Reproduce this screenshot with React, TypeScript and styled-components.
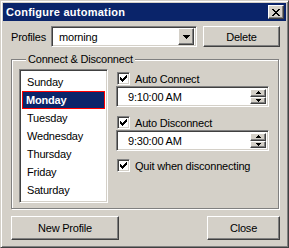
import React from "react";
import styled, { createGlobalStyle } from "styled-components";

const FACE = "#d4d0c8";
const NAVY = "#0a246a";

const GlobalStyle = createGlobalStyle`
  html, body {
    margin: 0;
    padding: 0;
    background: ${FACE};
  }
  body {
    font-family: "Liberation Sans", Arial, sans-serif;
    font-size: 11px;
    letter-spacing: -0.2px;
    color: #000;
  }
`;

const Window = styled.div`
  width: 289px;
  height: 248px;
  box-sizing: border-box;
  background: ${FACE};
  border: 1px solid;
  border-color: ${FACE} #404040 #404040 ${FACE};
  box-shadow: inset 1px 1px #fff, inset -1px -1px #808080;
  padding: 2px;
  display: flex;
  flex-direction: column;
`;

const TitleBar = styled.div`
  height: 18px;
  flex: none;
  background: ${NAVY};
  display: flex;
  align-items: center;
  justify-content: space-between;
  padding: 0 2px 0 3px;
`;

const TitleText = styled.div`
  color: #fff;
  font-weight: bold;
  font-size: 11px;
  letter-spacing: 0.25px;
`;

const raised = `
  border: 1px solid;
  border-color: #fff #404040 #404040 #fff;
  box-shadow: inset -1px -1px #808080;
  background: ${FACE};
`;

const sunken = `
  border: 1px solid;
  border-color: #808080 #fff #fff #808080;
  box-shadow: inset 1px 1px #404040, inset -1px -1px ${FACE};
`;

const CaptionButton = styled.div`
  ${raised}
  box-sizing: border-box;
  width: 16px;
  height: 14px;
  display: flex;
  align-items: center;
  justify-content: center;
`;

const ProfileRow = styled.div`
  display: flex;
  align-items: center;
  margin-top: 5px;
  padding-left: 8px;
  height: 21px;
`;

const FieldLabel = styled.div`
  width: 40px;
`;

const Combo = styled.div`
  ${sunken}
  box-sizing: border-box;
  width: 146px;
  height: 21px;
  background: #fff;
  display: flex;
  align-items: center;
  padding: 2px;
`;

const ComboText = styled.div`
  flex: 1;
  padding-left: 5px;
`;

const ArrowButton = styled.div`
  ${raised}
  box-sizing: border-box;
  width: 16px;
  height: 17px;
  display: flex;
  align-items: center;
  justify-content: center;
`;

const PushButton = styled.div<{ $width: number; $height?: number }>`
  ${raised}
  box-sizing: border-box;
  width: ${({ $width }) => $width}px;
  height: ${({ $height = 21 }) => $height}px;
  display: flex;
  align-items: center;
  justify-content: center;
`;

const GroupBox = styled.div`
  position: relative;
  box-sizing: border-box;
  width: 268px;
  height: 150px;
  margin: 12px 0 0 8px;
  border: 1px solid #808080;
  box-shadow: inset 1px 1px #fff, 1px 1px #fff;
  display: flex;
  gap: 8px;
  padding: 9px 0 0 7px;
`;

const GroupLabel = styled.div`
  position: absolute;
  left: 14px;
  top: -8px;
  padding: 0 2px;
  background: ${FACE};
  line-height: 14px;
`;

const ListBox = styled.div`
  ${sunken}
  box-sizing: border-box;
  width: 89px;
  height: 134px;
  background: #fff;
  padding: 3px 2px 2px;
`;

const ListItem = styled.div<{ $selected?: boolean }>`
  box-sizing: border-box;
  height: 18px;
  line-height: 16px;
  padding-left: ${({ $selected }) => ($selected ? 3 : 4)}px;
  border: 1px solid ${({ $selected }) => ($selected ? "#ff0000" : "transparent")};
  background: ${({ $selected }) => ($selected ? NAVY : "transparent")};
  color: ${({ $selected }) => ($selected ? "#fff" : "#000")};
  font-weight: ${({ $selected }) => ($selected ? "bold" : "normal")};
`;

const RightColumn = styled.div`
  display: flex;
  flex-direction: column;
`;

const CheckRow = styled.div<{ $top: number }>`
  display: flex;
  align-items: center;
  gap: 5px;
  height: 13px;
  margin-top: ${({ $top }) => $top}px;
  padding-left: 1px;
`;

const CheckBox = styled.div`
  ${sunken}
  box-sizing: border-box;
  width: 13px;
  height: 13px;
  background: #fff;
  display: flex;
  align-items: center;
  justify-content: center;
`;

const TimeField = styled.div`
  ${sunken}
  box-sizing: border-box;
  width: 153px;
  height: 21px;
  margin-top: 1px;
  background: #fff;
  display: flex;
  align-items: center;
  padding: 2px;
`;

const TimeText = styled.div`
  flex: 1;
  padding-left: 9px;
`;

const Spinner = styled.div`
  display: flex;
  flex-direction: column;
  width: 16px;
  height: 100%;
`;

const SpinButton = styled.div`
  ${raised}
  box-sizing: border-box;
  flex: 1;
  display: flex;
  align-items: center;
  justify-content: center;
`;

const ButtonRow = styled.div`
  display: flex;
  justify-content: space-between;
  margin: 7px 6px 0 8px;
`;

const CloseGlyph = () => (
  <svg width="8" height="7" viewBox="0 0 8 7" shapeRendering="crispEdges">
    <path
      d="M0 0h2v1H0zM6 0h2v1H6zM1 1h2v1H1zM5 1h2v1H5zM2 2h4v1H2zM3 3h2v1H3zM2 4h4v1H2zM1 5h2v1H1zM5 5h2v1H5zM0 6h2v1H0zM6 6h2v1H6z"
      fill="#000"
    />
  </svg>
);

const DownTriangle = ({ w = 7 }: { w?: number }) => {
  const h = Math.ceil(w / 2);
  return (
    <svg width={w} height={h} viewBox={`0 0 ${w} ${h}`} shapeRendering="crispEdges">
      <polygon points={`0,0 ${w},0 ${w / 2},${h}`} fill="#000" />
    </svg>
  );
};

const UpTriangle = ({ w = 5 }: { w?: number }) => {
  const h = Math.ceil(w / 2);
  return (
    <svg width={w} height={h} viewBox={`0 0 ${w} ${h}`} shapeRendering="crispEdges">
      <polygon points={`0,${h} ${w},${h} ${w / 2},0`} fill="#000" />
    </svg>
  );
};

const CheckMark = () => (
  <svg width="7" height="7" viewBox="0 0 7 7" shapeRendering="crispEdges">
    <path
      d="M6 0h1v1H6zM5 1h2v1H5zM0 2h1v1H0zM4 2h3v1H4zM0 3h2v1H0zM3 3h3v1H3zM0 4h5v1H0zM1 5h3v1H1zM2 6h1v1H2z"
      fill="#000"
    />
  </svg>
);

const Check = ({ label, top }: { label: string; top: number }) => (
  <CheckRow $top={top}>
    <CheckBox>
      <CheckMark />
    </CheckBox>
    <span>{label}</span>
  </CheckRow>
);

const Time = ({ value }: { value: string }) => (
  <TimeField>
    <TimeText>{value}</TimeText>
    <Spinner>
      <SpinButton>
        <UpTriangle />
      </SpinButton>
      <SpinButton>
        <DownTriangle w={5} />
      </SpinButton>
    </Spinner>
  </TimeField>
);

const DAYS = ["Sunday", "Monday", "Tuesday", "Wednesday", "Thursday", "Friday", "Saturday"];

export default function App() {
  return (
    <>
      <GlobalStyle />
      <Window>
        <TitleBar>
          <TitleText>Configure automation</TitleText>
          <CaptionButton>
            <CloseGlyph />
          </CaptionButton>
        </TitleBar>

        <ProfileRow>
          <FieldLabel>Profiles</FieldLabel>
          <Combo>
            <ComboText>morning</ComboText>
            <ArrowButton>
              <DownTriangle />
            </ArrowButton>
          </Combo>
          <PushButton $width={77} style={{ marginLeft: 6 }}>
            Delete
          </PushButton>
        </ProfileRow>

        <GroupBox>
          <GroupLabel>Connect &amp; Disconnect</GroupLabel>
          <ListBox>
            {DAYS.map((d) => (
              <ListItem key={d} $selected={d === "Monday"}>
                {d}
              </ListItem>
            ))}
          </ListBox>
          <RightColumn>
            <Check label="Auto Connect" top={3} />
            <Time value="9:10:00 AM" />
            <Check label="Auto Disconnect" top={9} />
            <Time value="9:30:00 AM" />
            <Check label="Quit when disconnecting" top={8} />
          </RightColumn>
        </GroupBox>

        <ButtonRow>
          <PushButton $width={108} $height={24}>
            New Profile
          </PushButton>
          <PushButton $width={73} $height={24}>
            Close
          </PushButton>
        </ButtonRow>
      </Window>
    </>
  );
}
